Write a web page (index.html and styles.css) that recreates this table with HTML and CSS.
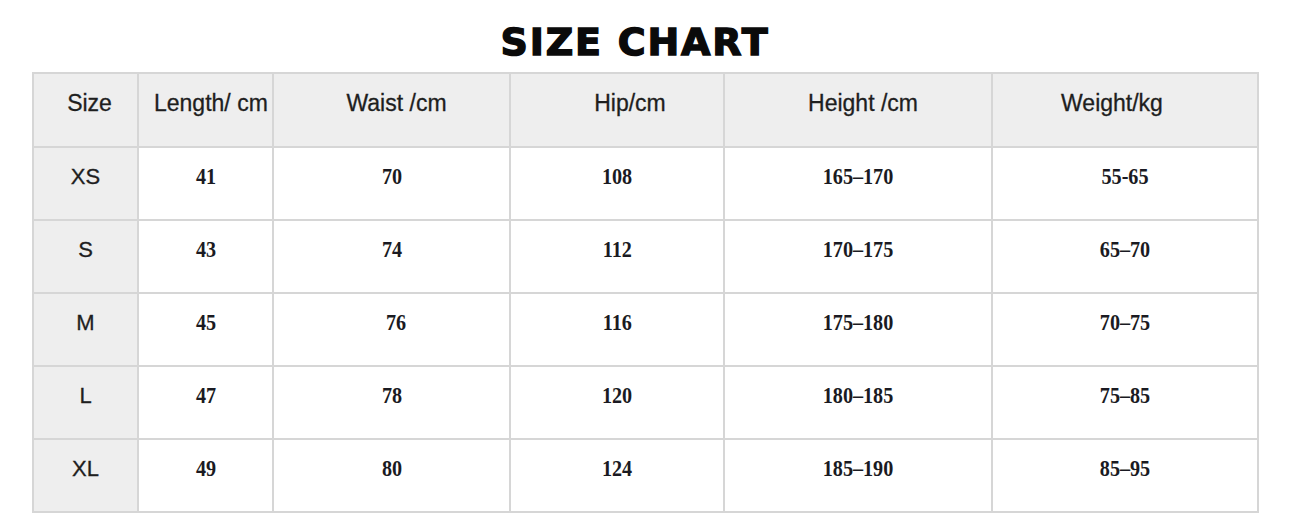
FILE: index.html
```html
<!DOCTYPE html>
<html lang="en">
<head>
<meta charset="utf-8">
<title>Size Chart</title>
<link rel="stylesheet" href="styles.css">
</head>
<body>
<div class="page">
  <h1 class="title">SIZE CHART</h1>
  <table class="chart">
    <colgroup>
      <col class="c-size">
      <col class="c-len">
      <col class="c-waist">
      <col class="c-hip">
      <col class="c-height">
      <col class="c-weight">
    </colgroup>
    <thead>
      <tr>
        <th class="h-size">Size</th>
        <th class="h-len">Length/ cm</th>
        <th class="h-waist">Waist /cm</th>
        <th class="h-hip">Hip/cm</th>
        <th class="h-height">Height /cm</th>
        <th class="h-weight">Weight/kg</th>
      </tr>
    </thead>
    <tbody>
      <tr><th>XS</th><td><span class="n">41</span></td><td><span class="n">70</span></td><td><span class="n">108</span></td><td><span class="n">165–170</span></td><td><span class="n">55-65</span></td></tr>
      <tr><th>S</th><td><span class="n">43</span></td><td><span class="n">74</span></td><td><span class="n">112</span></td><td><span class="n">170–175</span></td><td><span class="n">65–70</span></td></tr>
      <tr><th>M</th><td><span class="n">45</span></td><td><span class="n shift">76</span></td><td><span class="n">116</span></td><td><span class="n">175–180</span></td><td><span class="n">70–75</span></td></tr>
      <tr><th>L</th><td><span class="n">47</span></td><td><span class="n">78</span></td><td><span class="n">120</span></td><td><span class="n">180–185</span></td><td><span class="n">75–85</span></td></tr>
      <tr><th>XL</th><td><span class="n">49</span></td><td><span class="n">80</span></td><td><span class="n">124</span></td><td><span class="n">185–190</span></td><td><span class="n">85–95</span></td></tr>
    </tbody>
  </table>
</div>
</body>
</html>
```

FILE: styles.css
```css
html, body {
  margin: 0;
  padding: 0;
  background: #ffffff;
}

.page {
  width: 1290px;
  padding: 0 0 0 32px;
  box-sizing: border-box;
}

.title {
  margin: 0;
  padding: 21px 52px 0 0;
  height: 72px;
  box-sizing: border-box;
  text-align: center;
  font-family: "DejaVu Sans", "Liberation Sans", sans-serif;
  font-weight: bold;
  font-size: 38px;
  line-height: 42px;
  letter-spacing: 1.8px;
  color: #0a0a0a;
  -webkit-text-stroke: 1.4px #0a0a0a;
}

.chart {
  border-collapse: collapse;
  table-layout: fixed;
  width: 1227px;
  border: 2px solid #d3d3d3;
}

.c-size { width: 105px; }
.c-len { width: 135px; }
.c-waist { width: 237px; }
.c-hip { width: 214px; }
.c-height { width: 268px; }
.c-weight { width: 266px; }

.chart th,
.chart td {
  border: 2px solid #d6d6d6;
  height: 73px;
  padding: 0 0 14px 0;
  box-sizing: border-box;
  text-align: center;
  vertical-align: middle;
  white-space: nowrap;
  overflow: hidden;
}

.chart th {
  background: #eeeeee;
  font-family: "Liberation Sans", Arial, sans-serif;
  font-weight: normal;
  font-size: 22px;
  color: #1e1e1e;
  -webkit-text-stroke: 0.3px #1e1e1e;
}

.chart thead th {
  height: 74px;
  font-size: 23px;
}

.chart td {
  background: #ffffff;
}

.chart th.h-size { padding-left: 8px; }
.chart th.h-len { text-align: left; padding-left: 15px; }
.chart th.h-waist { padding-left: 10px; }
.chart th.h-hip { padding-left: 26px; }
.chart th.h-height { padding-left: 10px; }
.chart th.h-weight { padding-right: 26px; }

.n {
  display: inline-block;
  font-family: "Liberation Serif", "Times New Roman", serif;
  font-weight: bold;
  font-size: 24px;
  color: #1a1a22;
  transform: scaleX(0.84);
}

.n.shift { margin-left: 8px; }
```
